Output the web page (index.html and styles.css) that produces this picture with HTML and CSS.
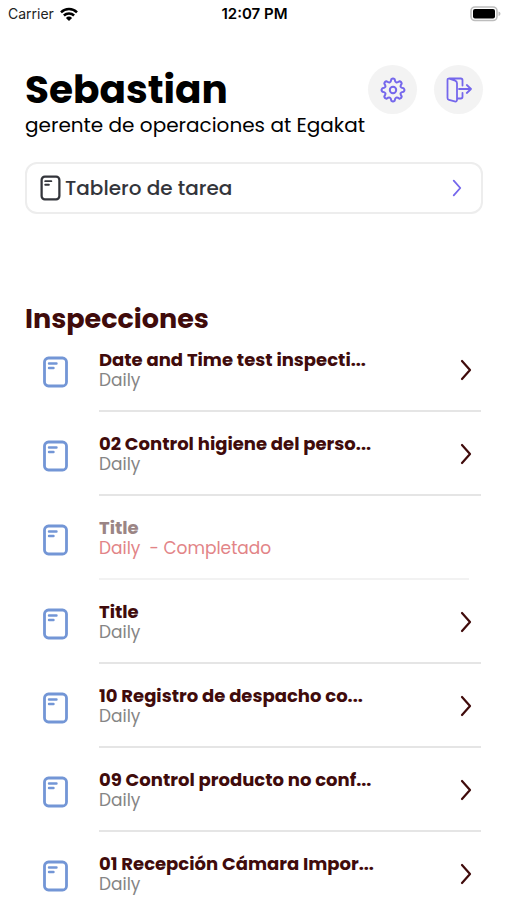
FILE: index.html
```html
<!DOCTYPE html>
<html lang="es">
<head>
<meta charset="utf-8">
<meta name="viewport" content="width=device-width, initial-scale=1">
<title>Inspecciones</title>
<link rel="stylesheet" href="styles.css">
</head>
<body>
<svg class="sprite" aria-hidden="true">
  <symbol id="sheet" viewBox="0 0 26 32">
    <rect x="2" y="2" width="22" height="28" rx="4" fill="none" stroke="currentColor" stroke-width="2.8"/>
    <path d="M6.500 7.500h7.500M6.500 12h4.500" fill="none" stroke="currentColor" stroke-width="2.400" stroke-linecap="round"/>
  </symbol>
  <symbol id="chevron" viewBox="0 0 12 22">
    <path d="M2 2l8 9-8 9" fill="none" stroke="currentColor" stroke-width="2.2" stroke-linecap="round" stroke-linejoin="round"/>
  </symbol>
</svg>

<div class="status">
  <div class="carrier">
    <span>Carrier</span>
    <svg class="wifi" viewBox="0 0 18 14" aria-hidden="true">
      <path d="M1 5.300a11.400 11.400 0 0 1 16 0M3.900 8.500a7.400 7.400 0 0 1 10.200 0" fill="none" stroke="#000" stroke-width="2.500"/>
      <path d="M9 14L5.900 10.900a4.400 4.400 0 0 1 6.200 0z"/>
    </svg>
  </div>
  <time class="clock">12:07 PM</time>
  <svg class="battery" viewBox="0 0 32 16" aria-hidden="true">
    <rect x="2" y="1" width="26" height="13.500" rx="4" fill="#fff" stroke="#bdbdbd" stroke-width="1.600"/>
    <rect x="4" y="3" width="22" height="9.500" rx="2" fill="#000"/>
    <path d="M29.500 5.500q2 .5 2 2.300t-2 2.300z" fill="#bdbdbd"/>
  </svg>
</div>

<main class="page">
  <header class="profile">
    <div class="who">
      <h1>Sebastian</h1>
      <p>gerente de operaciones at Egakat</p>
    </div>
    <div class="actions">
      <button class="round" type="button" aria-label="Ajustes">
        <svg viewBox="0 0 26 26" aria-hidden="true">
          <path d="M23.700 11.300A2.600 2.600 0 0 1 23.700 14.700Q18.600 15.300 21.700 19.400A2.600 2.600 0 0 1 19.400 21.700Q15.300 18.600 14.700 23.700A2.600 2.600 0 0 1 11.300 23.700Q10.700 18.600 6.600 21.700A2.600 2.600 0 0 1 4.300 19.400Q7.400 15.300 2.300 14.700A2.600 2.600 0 0 1 2.300 11.300Q7.400 10.700 4.300 6.600A2.600 2.600 0 0 1 6.600 4.300Q10.700 7.400 11.300 2.300A2.600 2.600 0 0 1 14.700 2.300Q15.300 7.400 19.400 4.300A2.600 2.600 0 0 1 21.700 6.600Q18.600 10.700 23.700 11.300Z" fill="none" stroke="currentColor" stroke-width="2" stroke-linejoin="round"/>
          <circle cx="13" cy="13" r="3.200" fill="none" stroke="currentColor" stroke-width="2"/>
        </svg>
      </button>
      <button class="round" type="button" aria-label="Salir">
        <svg viewBox="0 0 26 26" aria-hidden="true">
          <path d="M1.500 3v18q0 1.500 1.500 1.900l5.700 1.500q2.300.6 2.300-1.600V6.200q0-2-1.900-2.600L3.300 1.700Q1.500 1.200 1.500 3zM3 1.500h11.800q1.700 0 1.700 1.700v5.300M11 21.500h3.800q1.700 0 1.700-1.700v-4M13 12h12M20.800 8l4.200 4-4.200 4" fill="none" stroke="currentColor" stroke-width="1.800" stroke-linecap="round" stroke-linejoin="round"/>
        </svg>
      </button>
    </div>
  </header>

  <a class="board" href="#tablero">
    <svg class="board-icon" aria-hidden="true"><use href="#sheet"/></svg>
    <span>Tablero de tarea</span>
    <svg class="board-chevron" aria-hidden="true"><use href="#chevron"/></svg>
  </a>

  <section>
    <h2>Inspecciones</h2>
    <ul class="list">
      <li><svg class="sheet" aria-hidden="true"><use href="#sheet"/></svg>
        <a class="item" href="#i1"><span class="text"><b>Date and Time test inspecti...</b><span>Daily</span></span><svg class="chevron" aria-hidden="true"><use href="#chevron"/></svg></a></li>
      <li><svg class="sheet" aria-hidden="true"><use href="#sheet"/></svg>
        <a class="item" href="#i2"><span class="text"><b>02 Control higiene del perso...</b><span>Daily</span></span><svg class="chevron" aria-hidden="true"><use href="#chevron"/></svg></a></li>
      <li class="done"><svg class="sheet" aria-hidden="true"><use href="#sheet"/></svg>
        <div class="item"><span class="text"><b>Title</b><span>Daily&nbsp; - Completado</span></span></div></li>
      <li><svg class="sheet" aria-hidden="true"><use href="#sheet"/></svg>
        <a class="item" href="#i4"><span class="text"><b>Title</b><span>Daily</span></span><svg class="chevron" aria-hidden="true"><use href="#chevron"/></svg></a></li>
      <li><svg class="sheet" aria-hidden="true"><use href="#sheet"/></svg>
        <a class="item" href="#i5"><span class="text"><b>10 Registro de despacho co...</b><span>Daily</span></span><svg class="chevron" aria-hidden="true"><use href="#chevron"/></svg></a></li>
      <li><svg class="sheet" aria-hidden="true"><use href="#sheet"/></svg>
        <a class="item" href="#i6"><span class="text"><b>09 Control producto no conf...</b><span>Daily</span></span><svg class="chevron" aria-hidden="true"><use href="#chevron"/></svg></a></li>
      <li><svg class="sheet" aria-hidden="true"><use href="#sheet"/></svg>
        <a class="item" href="#i7"><span class="text"><b>01 Recepción Cámara Impor...</b><span>Daily</span></span><svg class="chevron" aria-hidden="true"><use href="#chevron"/></svg></a></li>
    </ul>
  </section>
</main>
</body>
</html>
```
FILE: styles.css
```css
* {
  box-sizing: border-box;
}

/* The list runs on below the fold; scrolling works without a visible bar. */
html {
  scrollbar-width: none;
}

body {
  margin: 0;
  background: #fff;
  color: #000;
  font-family: Poppins, Inter, "Liberation Sans", sans-serif;
}

h1, h2, p, ul {
  margin: 0;
  padding: 0;
}

a {
  color: inherit;
  text-decoration: none;
}

.sprite {
  display: none;
}

.status {
  display: grid;
  grid-template-columns: 1fr auto 1fr;
  align-items: center;
  height: 27px;
  padding: 0 6px 0 8px;
  font-family: Inter, "Liberation Sans", sans-serif;
  font-size: 15px;
}

.carrier {
  display: flex;
  align-items: center;
  gap: 6px;
  color: #222;
}

.carrier span {
  font-size: 14px;
}

.wifi {
  width: 18px;
  height: 14px;
}

.clock {
  font-weight: 600;
}

.battery {
  justify-self: end;
  width: 32px;
  height: 16px;
}

.page {
  padding: 37px 24px 0 25px;
}

.profile {
  display: flex;
  justify-content: space-between;
}

h1 {
  font-size: 39px;
  line-height: 52px;
  font-weight: 700;
}

.who p {
  font-size: 20px;
  line-height: 18px;
}

.actions {
  display: flex;
  gap: 17px;
  padding-top: 1px;
}

.round {
  display: grid;
  place-items: center;
  width: 49px;
  height: 49px;
  padding: 0;
  border: 0;
  border-radius: 50%;
  background: #f3f3f3;
  color: #7567ec;
}

.round svg {
  width: 26px;
  height: 26px;
}

.board {
  display: flex;
  align-items: center;
  gap: 4px;
  height: 52px;
  margin-top: 28px;
  padding: 0 19px 0 13px;
  border: 2px solid #ededed;
  border-radius: 12px;
  color: #33353b;
  font-size: 20px;
  font-weight: 500;
}

.board-icon {
  width: 21px;
  height: 26px;
}

.board-chevron {
  width: 10px;
  height: 18px;
  margin-left: auto;
  color: #7567ec;
}

h2 {
  margin: 87px 0 13px;
  color: #400b0b;
  font-size: 27px;
  line-height: 36px;
  font-weight: 700;
}

.list {
  display: grid;
  gap: 22px;
  padding: 0 2px 0 17px;
  list-style: none;
}

.list li {
  display: flex;
  gap: 30px;
}

.sheet {
  flex: none;
  width: 27px;
  height: 32px;
  margin-top: 6px;
  color: #7396d6;
}

.item {
  display: flex;
  flex: 1;
  align-items: center;
  justify-content: space-between;
  min-width: 0;
  padding: 0 9px 20px 0;
  border-bottom: 2px solid #e5e5e5;
  color: #858585;
  font-size: 17px;
  line-height: 20px;
}

.text {
  display: grid;
}

.text b {
  color: #400b0b;
  font-size: 18px;
}

.chevron {
  width: 12px;
  height: 22px;
}

.item .chevron {
  color: #400b0b;
}

.done .item {
  margin-right: 12px;
  border-color: #f2f2f2;
  color: #e28487;
}

.done .text b {
  color: #9b8585;
}
```
